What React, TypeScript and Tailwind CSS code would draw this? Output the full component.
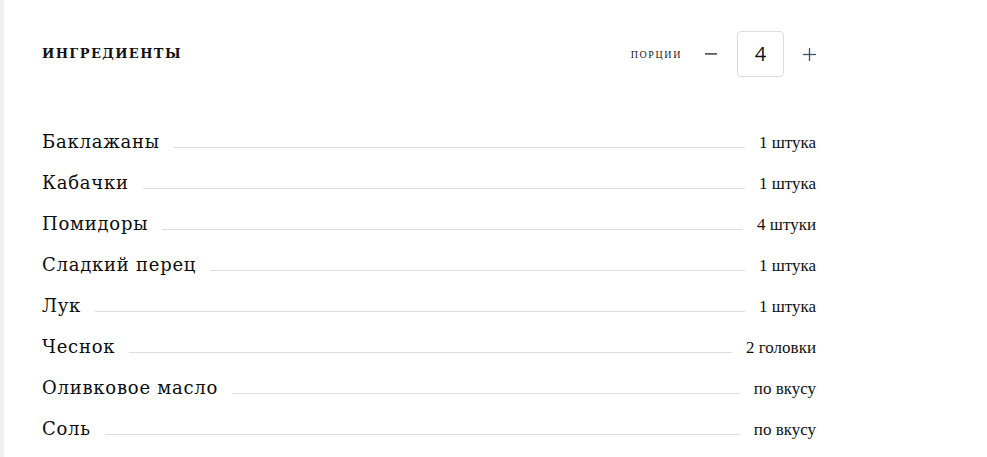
import React from "react";

const items: [string, string][] = [
  ["Баклажаны", "1 штука"],
  ["Кабачки", "1 штука"],
  ["Помидоры", "4 штуки"],
  ["Сладкий перец", "1 штука"],
  ["Лук", "1 штука"],
  ["Чеснок", "2 головки"],
  ["Оливковое масло", "по вкусу"],
  ["Соль", "по вкусу"],
];

export default function App() {
  return (
    <div className="flex min-h-[457px] w-[987px] bg-white">
      <div className="w-[4px] shrink-0 bg-[#f1f1f1]" />
      <div className="w-[812px] pl-[38px] pt-[31px]">
        <div className="flex h-[46px] items-center justify-between">
          <h2 className="font-['DejaVu_Serif',serif] text-[13px] font-bold tracking-[1.4px] text-[#111]">
            ИНГРЕДИЕНТЫ
          </h2>
          <div className="flex items-center">
            <span className="font-['Liberation_Serif',serif] text-[10px] tracking-[1.6px] text-[#222]">
              ПОРЦИИ
            </span>
            <button className="ml-[22px] flex h-[20px] w-[14px] items-center justify-center">
              <svg width="12" height="2" viewBox="0 0 12 2">
                <rect x="0" y="0.25" width="12" height="1.3" fill="#222" />
              </svg>
            </button>
            <div className="ml-[19px] flex h-[46px] w-[47px] items-center justify-center rounded-[4px] border border-[#dcdcdc] font-['Open_Sans',sans-serif] text-[20px] text-[#111]">
              4
            </div>
            <button className="ml-[18px] flex h-[20px] w-[14px] items-center justify-center">
              <svg width="13" height="13" viewBox="0 0 13 13">
                <rect x="0" y="5.85" width="13" height="1.3" fill="#3f5366" />
                <rect x="5.85" y="0" width="1.3" height="13" fill="#3f5366" />
              </svg>
            </button>
          </div>
        </div>
        <div className="mt-[43px]">
          {items.map(([name, qty]) => (
            <div key={name} className="flex h-[41px] items-baseline pt-[8px]">
              <span className="font-['DejaVu_Serif',serif] text-[18px] tracking-[0.75px] text-[#0d0d0d]">
                {name}
              </span>
              <div className="mx-[14px] h-px flex-1 bg-[#dddddd]" />
              <span className="font-['Liberation_Serif',serif] text-[17px] text-[#111]">
                {qty}
              </span>
            </div>
          ))}
        </div>
      </div>
    </div>
  );
}
